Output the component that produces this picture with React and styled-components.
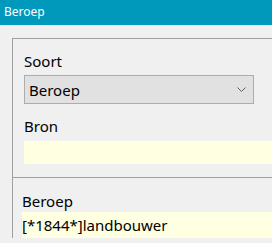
import React from "react";
import styled, { createGlobalStyle } from "styled-components";

const Global = createGlobalStyle`
	html, body {
		margin: 0;
		padding: 0;
		background: #f0f0f0;
		overflow: hidden;
	}
	body {
		font-family: "Noto Sans", "Open Sans", sans-serif;
	}
`;

const Window = styled.div`
	width: 272px;
	height: 243px;
	background: #f0f0f0;
	overflow: hidden;
`;

const TitleBar = styled.div`
	height: 25px;
	background: #0099bc;
	color: #ffffff;
	font-size: 12px;
	line-height: 24px;
	padding-left: 4px;
`;

const Body = styled.div`
	padding: 13px 0 0 12px;
`;

// group box with only its top / left edges visible
const Group = styled.div`
	border-top: 1px solid #a0a0a0;
	border-left: 1px solid #a0a0a0;
	margin-right: -20px;
`;

const Section = styled.div`
	display: flex;
	flex-direction: column;
	padding: ${(p) => p.$pad};
	border-top: ${(p) => (p.$divider ? "1px solid #a0a0a0" : "none")};
`;

const Label = styled.div`
	font-size: 15px;
	line-height: 20px;
	color: #000;
	margin: ${(p) => p.$margin || "0"};
`;

const Select = styled.div`
	display: flex;
	align-items: center;
	justify-content: space-between;
	box-sizing: border-box;
	width: 230px;
	height: 29px;
	margin-top: ${(p) => p.$mt || 0}px;
	background: #e1e1e1;
	border: 1px solid #adadad;
	padding: 0 7px 0 4px;
	font-size: 15px;
	color: #000;
`;

const Field = styled.div`
	box-sizing: border-box;
	height: ${(p) => p.$h}px;
	background: #ffffe1;
	font-size: 15px;
	line-height: ${(p) => p.$h}px;
	color: #000;
	margin-top: ${(p) => p.$mt || 0}px;
`;

const Chevron = () => (
	<svg width="9" height="5" viewBox="0 0 9 5">
		<path d="M0.5 0.5 L4.5 4.5 L8.5 0.5" fill="none" stroke="#606060" strokeWidth="1" />
	</svg>
);

export default function App() {
	return (
		<Window>
			<Global />
			<TitleBar>Beroep</TitleBar>
			<Body>
				<Group>
					<Section $pad="12px 0 13px 11px">
						<Label>Soort</Label>
						<Select $mt={4}>
							<span>Beroep</span>
							<Chevron />
						</Select>
						<Label $margin="12px 0 0">Bron</Label>
						<Field $h={23} $mt={5} />
					</Section>
					<Section $divider $pad="13px 0 0 9px">
						<Label>Beroep</Label>
						<Field $h={26} $mt={1}>[*1844*]landbouwer</Field>
					</Section>
				</Group>
			</Body>
		</Window>
	);
}
